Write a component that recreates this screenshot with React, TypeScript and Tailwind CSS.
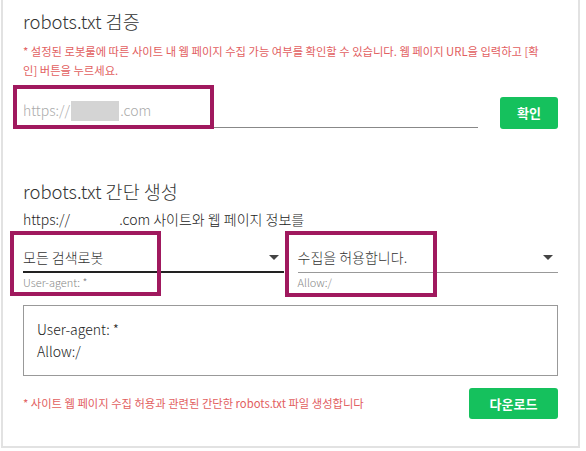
const font = { fontFamily: '"Noto Sans CJK KR", "Noto Sans", sans-serif' };

function Caret() {
  return <span className="h-0 w-0 border-x-[5px] border-t-[5px] border-x-transparent border-t-[#444]" />;
}

function SelectField({ value, label, dark }: { value: string; label: string; dark?: boolean }) {
  return (
    <div className="flex-1">
      <div
        className={`flex h-[30px] items-center justify-between pr-[5px] ${
          dark ? 'border-b-2 border-[#222]' : 'border-b border-[#999]'
        }`}
      >
        <span className="text-[14px] font-light text-[#333]">{value}</span>
        <Caret />
      </div>
      <p className="mt-[2px] text-[11px] font-light leading-[14px] text-[#888]">{label}</p>
    </div>
  );
}

export default function App() {
  return (
    <div className="relative h-[451px] w-[586px] bg-white" style={font}>
      <div className="ml-[1px] h-[448px] w-[579px] border-x-2 border-b-2 border-[#e2e2e2] px-[20px] pt-[9px]">
        <h1 className="text-[18.5px] font-light leading-[24px] text-[#333]">robots.txt 검증</h1>
        <p className="mt-[9px] text-[11.3px] leading-[19px] text-[#e2605f]">
          <span className="whitespace-nowrap">
            * 설정된 로봇룰에 따른 사이트 내 웹 페이지 수집 가능 여부를 확인할 수 있습니다. 웹 페이지 URL을 입력하고 [확
          </span>
          <br />
          인] 버튼을 누르세요.
        </p>

        <div className="mt-[14px] flex items-end justify-between">
          <div className="flex h-[34px] w-[455px] items-center border-b border-[#888] text-[14px] font-light text-[#aaa]">
            https://
            <span className="mx-[1px] inline-block h-[20px] w-[48px] bg-[#d4d4d4]" />
            .com
          </div>
          <button className="mb-[-1px] h-[32px] w-[58px] rounded-[3px] bg-[#15c15d] text-[13px] font-bold text-white">
            확인
          </button>
        </div>

        <h2 className="mt-[51px] text-[18.5px] font-light leading-[24px] text-[#333]">robots.txt 간단 생성</h2>
        <p className="mt-[6px] text-[14px] font-light leading-[20px] text-[#222]">
          https://<span className="inline-block w-[49px]" />.com 사이트와 웹 페이지 정보를
        </p>

        <div className="mt-[14px] flex gap-[14px]">
          <SelectField value="모든 검색로봇" label="User-agent: *" dark />
          <SelectField value="수집을 허용합니다." label="Allow:/" />
        </div>

        <div className="mt-[16px] h-[71px] border border-[#999] px-[13px] pt-[12px] text-[14px] font-light leading-[22px] text-[#222]">
          <div>User-agent: *</div>
          <div>Allow:/</div>
        </div>

        <div className="mt-[12px] flex items-center justify-between">
          <p className="text-[11.3px] text-[#e2605f]">
            * 사이트 웹 페이지 수집 허용과 관련된 간단한 robots.txt 파일 생성합니다
          </p>
          <button className="h-[31px] w-[89px] rounded-[3px] bg-[#15c15d] text-[13px] font-bold text-white">
            다운로드
          </button>
        </div>
      </div>

      <div className="pointer-events-none absolute left-[13px] top-[85px] h-[44px] w-[201px] border-4 border-[#a0195e]" />
      <div className="pointer-events-none absolute left-[10px] top-[231px] h-[65px] w-[151px] border-4 border-[#a0195e]" />
      <div className="pointer-events-none absolute left-[285px] top-[231px] h-[66px] w-[152px] border-4 border-[#a0195e]" />
    </div>
  );
}
